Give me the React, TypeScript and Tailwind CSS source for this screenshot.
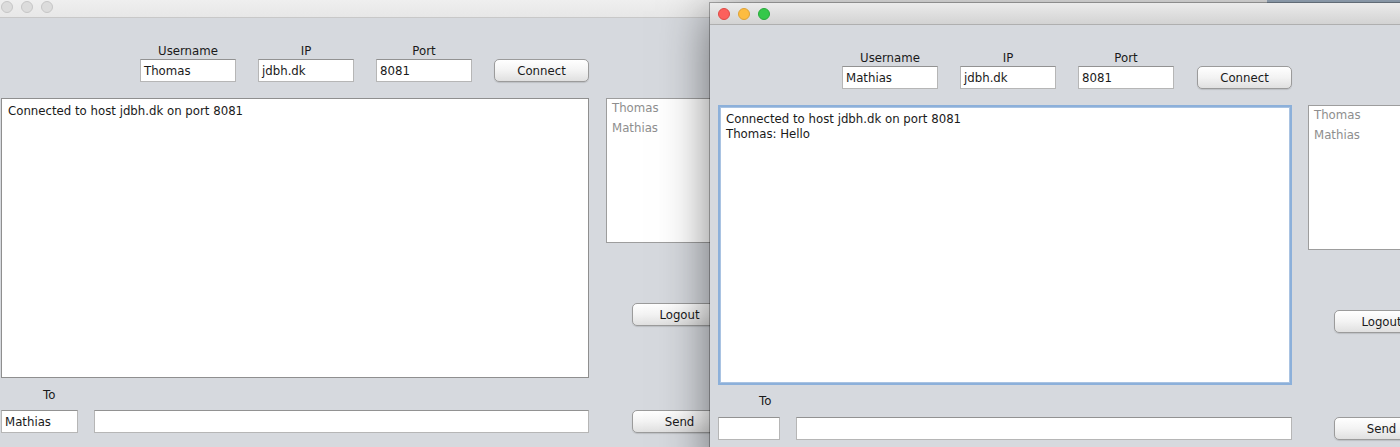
const base = "font-['DejaVu_Sans',sans-serif] text-[11.75px] leading-[14px] text-[#1a1a1a]";

function Field({ value, className = "" }: { value?: string; className?: string }) {
  return (
    <div
      className={`h-[23px] shrink-0 bg-white border border-[#b6b6b6] border-t-[#929292] pl-[3px] flex items-center whitespace-nowrap ${className}`}
    >
      {value}
    </div>
  );
}

function AquaButton({ label, className = "" }: { label: string; className?: string }) {
  return (
    <div
      className={`h-[23px] w-[95px] shrink-0 rounded-[5px] border border-[#9b9b9b] bg-linear-to-b from-white via-[#f3f3f3] to-[#e0e0e0] shadow-[0_1px_1px_rgba(0,0,0,0.12)] flex items-center justify-center ${className}`}
    >
      {label}
    </div>
  );
}

function Labeled({ label, value }: { label: string; value: string }) {
  return (
    <div className="flex flex-col items-center shrink-0">
      <span className="h-[14px] mb-[1px]">{label}</span>
      <Field value={value} className="w-[96px]" />
    </div>
  );
}

function UserList() {
  return (
    <div className="w-[130px] h-[145px] shrink-0 bg-white border border-[#9d9d9d] pl-[5px] leading-[19.5px] text-[#8e8e8e]">
      <div>Thomas</div>
      <div>Mathias</div>
    </div>
  );
}

export default function App() {
  return (
    <div className={`relative w-[1400px] h-[447px] overflow-hidden bg-[#a3b4c7] ${base}`}>
      {/* back window (inactive) */}
      <div className="absolute left-0 top-[-4px] w-[1267px] h-[470px] bg-[#d6d9de] flex flex-col">
        <div className="h-[22px] shrink-0 border-b border-[#c8c8c8] bg-linear-to-b from-[#f1f1f1] to-[#e7e7e7] flex items-center gap-[8px] pl-[1px]">
          <span className="w-[12px] h-[12px] rounded-full bg-[#dcdcdc] border border-[#c6c6c6]" />
          <span className="w-[12px] h-[12px] rounded-full bg-[#dcdcdc] border border-[#c6c6c6]" />
          <span className="w-[12px] h-[12px] rounded-full bg-[#dcdcdc] border border-[#c6c6c6]" />
        </div>

        <div className="flex items-end gap-[22px] pl-[140px] pt-[26px]">
          <Labeled label="Username" value="Thomas" />
          <Labeled label="IP" value="jdbh.dk" />
          <Labeled label="Port" value="8081" />
          <AquaButton label="Connect" />
        </div>

        <div className="flex items-start mt-[16px]">
          <div className="ml-[1px] w-[588px] h-[280px] shrink-0 bg-white border border-[#8f8f8f] pt-[5px] pl-[6px] leading-[15px]">
            Connected to host jdbh.dk on port 8081
          </div>
          <div className="ml-[17px] flex flex-col shrink-0">
            <UserList />
            <AquaButton label="Logout" className="ml-[26px] mt-[60px]" />
          </div>
        </div>

        <div className="mt-[10px] pl-[43px] h-[14px]">To</div>

        <div className="flex items-center mt-[8px]">
          <Field value="Mathias" className="ml-[1px] w-[77px]" />
          <Field className="ml-[16px] w-[495px]" />
          <AquaButton label="Send" className="ml-[43px]" />
        </div>
      </div>

      {/* front window (active) */}
      <div className="absolute left-[710px] top-[3px] w-[760px] h-[470px] bg-[#d6d9de] flex flex-col shadow-[0_0_0_1px_rgba(0,0,0,0.28),0_8px_45px_rgba(0,0,0,0.5)]">
        <div className="h-[22px] shrink-0 border-b border-[#afafaf] bg-linear-to-b from-[#ebebeb] to-[#d3d3d3] flex items-center gap-[8px] pl-[8px]">
          <span className="w-[12px] h-[12px] rounded-full bg-[#fc605c] border border-[#de4a45]" />
          <span className="w-[12px] h-[12px] rounded-full bg-[#fdbc40] border border-[#dea236]" />
          <span className="w-[12px] h-[12px] rounded-full bg-[#34c84a] border border-[#28a93a]" />
        </div>

        <div className="flex items-end gap-[22px] pl-[132px] pt-[26px]">
          <Labeled label="Username" value="Mathias" />
          <Labeled label="IP" value="jdbh.dk" />
          <Labeled label="Port" value="8081" />
          <AquaButton label="Connect" className="ml-[1px]" />
        </div>

        <div className="flex items-start mt-[16px]">
          <div className="ml-[8px] w-[574px] h-[280px] shrink-0 bg-white border-2 border-[#8cb0da] shadow-[inset_0_0_0_1px_#a9c3e2] pt-[5px] pl-[6px] leading-[15px]">
            <div>Connected to host jdbh.dk on port 8081</div>
            <div>Thomas: Hello</div>
          </div>
          <div className="ml-[16px] flex flex-col shrink-0">
            <UserList />
            <AquaButton label="Logout" className="ml-[26px] mt-[60px]" />
          </div>
        </div>

        <div className="mt-[9px] pl-[49px] h-[14px]">To</div>

        <div className="flex items-center mt-[9px]">
          <Field className="ml-[8px] w-[62px]" />
          <Field className="ml-[16px] w-[496px]" />
          <AquaButton label="Send" className="ml-[42px]" />
        </div>
      </div>
    </div>
  );
}
